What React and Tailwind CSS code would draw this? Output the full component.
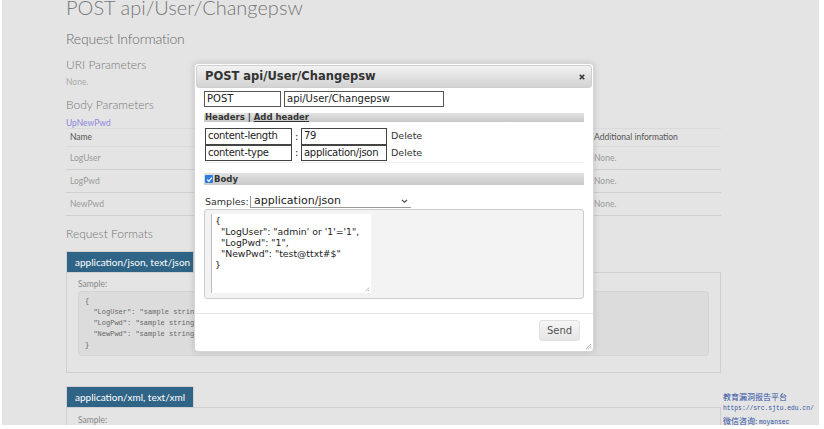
import React from 'react';

const rows = [
    { name: 'LogUser', info: 'None.' },
    { name: 'LogPwd', info: 'None.' },
    { name: 'NewPwd', info: 'None.' },
];

const Dialog = () => {
    return (
        <div className="absolute left-[194px] top-[63px] w-[400px] h-[289px] bg-white rounded-[4px] border border-[#d6d6d6] shadow-[0_0_6px_rgba(0,0,0,0.15)] font-['DejaVu_Sans',sans-serif] text-[#222]">
            {/* title bar */}
            <div className="mx-[1px] mt-[1px] h-[23px] flex items-center justify-between pl-[8px] pr-[6px] rounded-[3px] border border-[#cfcfcf] bg-gradient-to-b from-[#f2f2f2] to-[#d3d3d3]">
                <span className="text-[11.5px] font-bold text-[#333]">POST api/User/Changepsw</span>
                <svg viewBox="0 0 8 8" className="w-[6px] h-[6px]"><path d="M1 1 L7 7 M7 1 L1 7" stroke="#333" strokeWidth="2" /></svg>
            </div>

            <div className="px-[9px]">
                <div className="flex gap-[3px] mt-[3px]">
                    <div className="w-[77px] h-[16px] border border-[#555] px-[2px] text-[10px] leading-[14px]">POST</div>
                    <div className="w-[160px] h-[16px] border border-[#555] px-[2px] text-[10px] leading-[14px]">api/User/Changepsw</div>
                </div>

                <div className="mt-[6px] h-[9px] w-[380px] bg-gradient-to-b from-[#e2e2e2] to-[#c9c9c9] text-[8.5px] font-bold leading-[9px] text-[#333] px-[1px]">
                    Headers | <span className="underline">Add header</span>
                </div>

                <div className="mt-[6px] w-[380px] pb-[1px] border-b border-[#f0f0f0]">
                    {[['content-length', '79'], ['content-type', 'application/json']].map(([k, v]) => (
                        <div key={k} className="flex items-center h-[16.5px] text-[10px] tracking-[-0.3px]">
                            <div className="ml-[1px] w-[87px] h-[16.5px] border border-[#444] px-[2px] leading-[14px]">{k}</div>
                            <span className="w-[9px] text-center">:</span>
                            <div className="w-[86px] h-[16.5px] border border-[#444] px-[2px] leading-[14px]">{v}</div>
                            <span className="ml-[4px] text-[9.5px] tracking-normal text-[#333]">Delete</span>
                        </div>
                    ))}
                </div>

                <div className="mt-[10px] h-[12px] w-[380px] bg-gradient-to-b from-[#e2e2e2] to-[#c9c9c9] flex items-center gap-[1px] text-[8.5px] font-bold text-[#333]">
                    <span className="ml-[1px] w-[8px] h-[8px] rounded-[1px] bg-[#2c7be5] flex items-center justify-center">
                        <svg viewBox="0 0 8 8" className="w-[7px] h-[7px]"><path d="M1.3 4.2 L3.2 6 L6.8 1.8" stroke="white" strokeWidth="1.4" fill="none" /></svg>
                    </span>
                    Body
                </div>

                <div className="mt-[10px] flex items-center">
                    <span className="ml-[1px] text-[9.5px] text-[#333] w-[45px]">Samples:</span>
                    <div className="w-[161px] h-[12px] border-l border-b border-[#999] flex items-center justify-between px-[3px] text-[11px]">
                        <span>application/json</span>
                        <svg viewBox="0 0 8 6" className="w-[7px] h-[5px]"><path d="M1 1 L4 4 L7 1" stroke="#333" strokeWidth="1.3" fill="none" /></svg>
                    </div>
                </div>

                <div className="w-[380px] h-[90px] bg-[#f3f3f3] border border-[#cdcdcd] rounded-[3px] pt-[4px] pl-[6px]">
                    <div className="relative w-[160px] h-[79px] bg-white border-l border-[#bbb] pl-[3px] pt-[1px] text-[9.3px] leading-[11px] text-[#222] whitespace-pre">
{`{
  "LogUser": "admin' or '1'='1",
  "LogPwd": "1",
  "NewPwd": "test@ttxt#$"
}`}
                        <svg viewBox="0 0 8 8" className="absolute right-[1px] bottom-[1px] w-[6px] h-[6px]"><path d="M7 2 L2 7 M7 5 L5 7" stroke="#888" strokeWidth="0.8" /></svg>
                    </div>
                </div>
            </div>

            <div className="mt-[14px] border-t border-[#e8e8e8] flex justify-end pr-[13px] pt-[6px]">
                <div className="w-[41px] h-[21px] rounded-[3px] border border-[#e0e0e0] bg-gradient-to-b from-[#f6f6f6] to-[#e5e5e5] text-[10px] text-[#555] flex items-center justify-center">Send</div>
            </div>
            <svg viewBox="0 0 8 8" className="absolute right-[1px] bottom-[1px] w-[7px] h-[7px]"><path d="M7 1 L1 7 M7 3.5 L3.5 7 M7 6 L6 7" stroke="#999" strokeWidth="0.8" /></svg>
        </div>
    );
};

const App = () => {
    return (
        <div className="relative w-[824px] h-[429px] bg-white overflow-hidden">
            <div className="ml-[2px] w-[817px] h-[425px] bg-[#e4e4e4] overflow-hidden font-['Lato',sans-serif] text-[#6e6e6e]">
                <div className="pl-[64px] w-[719px]">
                    <h1 className="mt-[-8px] text-[20px] font-light leading-[30px] text-[#777]">POST api/User/Changepsw</h1>
                    <h2 className="mt-[7px] text-[14px] font-light leading-[20px] text-[#6a6a6a] tracking-[-0.2px]">Request Information</h2>
                    <h3 className="mt-[7px] text-[12px] font-light leading-[18px] text-[#777]">URI Parameters</h3>
                    <p className="mt-[1px] text-[8.5px] leading-[14px] text-[#aaa]">None.</p>
                    <h3 className="mt-[7px] text-[12px] font-light leading-[18px] text-[#777]">Body Parameters</h3>
                    <p className="mt-[3px] text-[8.5px] leading-[12px] text-[#8c86de]">UpNewPwd</p>

                    <div className="mt-[-1px] w-[655px] text-[8.5px]">
                        <div className="grid grid-cols-[528px_1fr] h-[19px] items-center border-t border-b border-[#dadada] text-[#555]">
                            <span className="pl-[4px]">Name</span>
                            <span>Additional information</span>
                        </div>
                        {rows.map((r) => (
                            <div key={r.name} className="grid grid-cols-[528px_1fr] h-[23px] items-center border-b border-[#cfcfcf] text-[#9a9a9a]">
                                <span className="pl-[4px]">{r.name}</span>
                                <span>{r.info}</span>
                            </div>
                        ))}
                    </div>

                    <h3 className="mt-[9px] text-[12px] font-light leading-[18px] text-[#777]">Request Formats</h3>

                    <div className="mt-[8px] w-[655px]">
                        <div className="h-[21px] w-[128px] pl-[8px] bg-[#2f6486] text-white text-[10px] leading-[20px] border border-[#d0d0d0] border-b-0 whitespace-nowrap overflow-hidden">application/json, text/json</div>
                        <div className="h-[101px] border border-[#cfcfcf] px-[11px] pt-[6px]">
                            <p className="text-[8.5px] leading-[11px] text-[#888]">Sample:</p>
                            <div className="mt-[1px] h-[65px] bg-[#dcdcdc] border border-[#d4d4d4] rounded-[4px] px-[6px] pt-[4px] font-['Liberation_Mono',monospace] text-[7px] leading-[11px] text-[#666] whitespace-pre">
{`{
  "LogUser": "sample string 1",
  "LogPwd": "sample string 2",
  "NewPwd": "sample string 3"
}`}
                            </div>
                        </div>
                    </div>

                    <div className="mt-[13px] w-[655px]">
                        <div className="h-[21px] w-[128px] pl-[8px] bg-[#2f6486] text-white text-[10px] leading-[20px] border border-[#d0d0d0] border-b-0 whitespace-nowrap">application/xml, text/xml</div>
                        <div className="h-[40px] border border-[#cfcfcf] px-[11px] pt-[7px]">
                            <p className="text-[8.5px] leading-[11px] text-[#888]">Sample:</p>
                        </div>
                    </div>
                </div>
            </div>

            <div className="absolute left-[723px] top-[391px] text-[#2f52a3] leading-[12px]">
                <p className="text-[8px] font-['Noto_Sans_CJK_SC',sans-serif]">教育漏洞报告平台</p>
                <p className="text-[6.3px] font-['Liberation_Mono',monospace]">https://src.sjtu.edu.cn/</p>
                <p className="text-[8px] font-['Noto_Sans_CJK_SC',sans-serif]">微信咨询: <span className="text-[6.3px] font-['Liberation_Mono',monospace]">moyansec</span></p>
            </div>

            <Dialog />
        </div>
    );
};

export default App;
